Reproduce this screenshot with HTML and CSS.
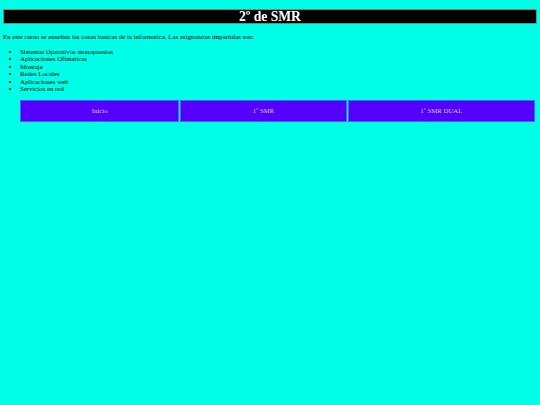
FILE: index.html
```html
<!DOCTYPE html>
<html lang="es">
<head>
<meta charset="utf-8">
<title>2º de SMR</title>
<link rel="stylesheet" href="styles.css">
</head>
<body>
<h1 class="title">2º de SMR</h1>
<p class="intro">En este curso se enseñan las cosas basicas de la informatica. Las asignaturas impartidas son:</p>
<ul class="subjects">
<li>Sistemas Operativos monopuestos</li>
<li>Aplicaciones Ofimaticas</li>
<li>Montaje</li>
<li>Redes Locales</li>
<li>Aplicaciones web</li>
<li>Servicios en red</li>
</ul>
<table class="nav">
<tr>
<td class="c1">Inicio</td>
<td class="c2">1º SMR</td>
<td class="c3">1º SMR DUAL</td>
</tr>
</table>
</body>
</html>
```
FILE: styles.css
```css
html, body {
  background: #00ffe6;
}
body {
  margin: 0;
  padding: 9px 3px 0 3px;
  font-family: "Liberation Serif", serif;
  font-size: 6.8px;
  color: #000;
}
.title {
  margin: 0;
  background: #000;
  color: #fff;
  border: 1px solid #4a9c92;
  text-align: center;
  font-size: 13.6px;
  line-height: 13px;
  height: 13px;
  font-weight: bold;
}
.intro {
  margin: 9px 0 0 0;
  line-height: 7.5px;
}
.subjects {
  margin: 7px 0 0 0;
  padding-left: 17px;
  line-height: 7.5px;
}
.nav {
  margin: 6px 0 0 16px;
  border-collapse: separate;
  border-spacing: 1px;
  border: 0;
  width: 517px;
  color: #d8c4ff;
  font-size: 6.8px;
}
.nav td {
  background: #5500ff;
  border: 1px solid #4466ff;
  height: 20px;
  padding: 0;
  text-align: center;
}
.c1 { width: 158px; }
.c2 { width: 165px; }
.c3 { width: 186px; }
```
